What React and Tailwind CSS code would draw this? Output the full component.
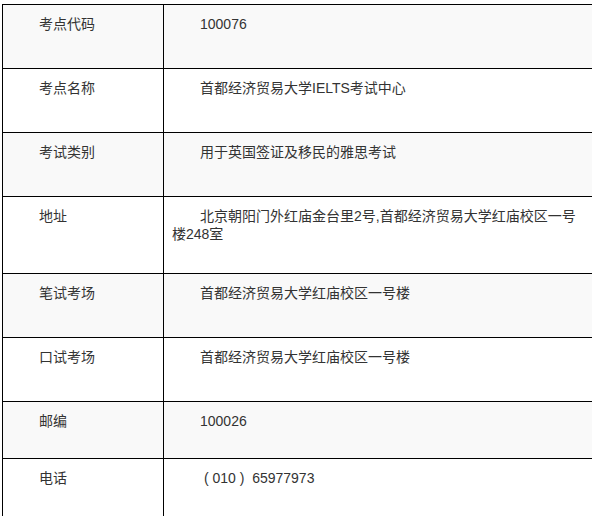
export default function App() {
  const rows = [
    { label: "考点代码", value: "100076", h: "h-[64px]", bg: "bg-[#f9f9f9]" },
    { label: "考点名称", value: "首都经济贸易大学IELTS考试中心", h: "h-[64px]", bg: "bg-white" },
    { label: "考试类别", value: "用于英国签证及移民的雅思考试", h: "h-[64px]", bg: "bg-[#f9f9f9]" },
    { label: "地址", value: "北京朝阳门外红庙金台里2号,首都经济贸易大学红庙校区一号楼248室", h: "h-[77px]", bg: "bg-white" },
    { label: "笔试考场", value: "首都经济贸易大学红庙校区一号楼", h: "h-[64px]", bg: "bg-[#f9f9f9]" },
    { label: "口试考场", value: "首都经济贸易大学红庙校区一号楼", h: "h-[64px]", bg: "bg-white" },
    { label: "邮编", value: "100026", h: "h-[57px]", bg: "bg-[#f9f9f9]" },
    { label: "电话", value: "\u00a0(\u00a0010\u00a0)\u00a0\u00a065977973", h: "h-[64px]", bg: "bg-white" },
  ];
  return (
    <div className="w-[600px] h-[516px] overflow-hidden bg-white">
      <div
        className="ml-[2px] mt-[4px] w-[590px] border-l border-t border-black text-[14px] leading-[18px] text-[#333]"
        style={{ fontFamily: '"Liberation Sans", Arial, "Noto Sans CJK SC", sans-serif' }}
      >
        {rows.map((r, i) => (
          <div key={i} className={`flex ${r.h} ${r.bg} border-b border-black`}>
            <div className="w-[161px] shrink-0 border-r border-black pl-[8px] pr-[8px] pt-[10px] indent-[28px]">
              {r.label}
            </div>
            <div className="flex-1 pl-[8px] pr-[8px] pt-[10px] indent-[28px]">
              {r.value}
            </div>
          </div>
        ))}
      </div>
    </div>
  );
}
